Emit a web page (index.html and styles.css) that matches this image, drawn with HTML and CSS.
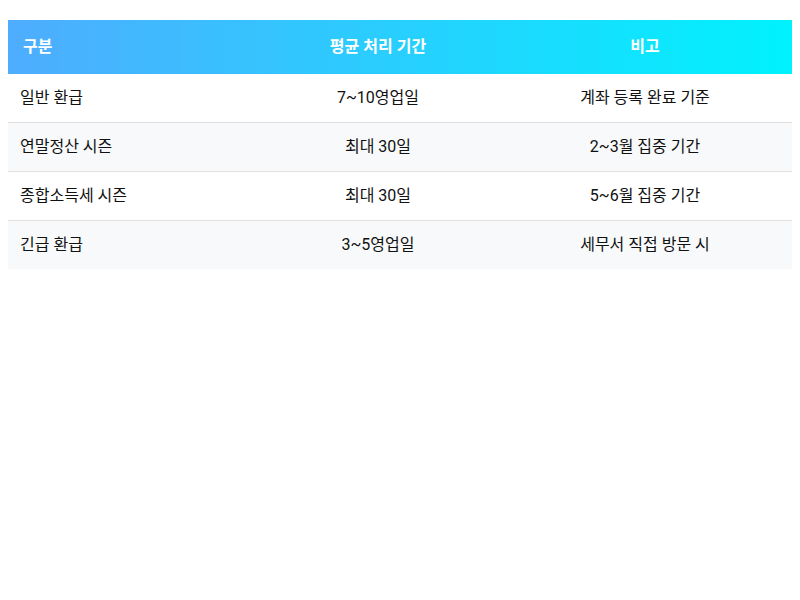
FILE: index.html
```html
<!DOCTYPE html>
<html lang="ko">
<head>
<meta charset="utf-8">
<link rel="stylesheet" href="styles.css">
</head>
<body>
<table class="refund-table">
  <colgroup>
    <col class="col-type">
    <col class="col-time">
    <col class="col-note">
  </colgroup>
  <thead>
    <tr>
      <th>구분</th>
      <th>평균 처리 기간</th>
      <th>비고</th>
    </tr>
  </thead>
  <tbody>
    <tr>
      <td>일반 환급</td>
      <td>7~10영업일</td>
      <td>계좌 등록 완료 기준</td>
    </tr>
    <tr>
      <td>연말정산 시즌</td>
      <td>최대 30일</td>
      <td>2~3월 집중 기간</td>
    </tr>
    <tr>
      <td>종합소득세 시즌</td>
      <td>최대 30일</td>
      <td>5~6월 집중 기간</td>
    </tr>
    <tr>
      <td>긴급 환급</td>
      <td>3~5영업일</td>
      <td>세무서 직접 방문 시</td>
    </tr>
  </tbody>
</table>
</body>
</html>
```

FILE: styles.css
```css
body {
  margin: 8px;
  font-family: Roboto, "Noto Sans CJK KR", sans-serif;
  background: #fff;
}
.refund-table {
  margin-top: 12px;
  width: 784px;
  border-collapse: collapse;
  table-layout: fixed;
  font-size: 16px;
  color: #111;
}
.col-type { width: 250px; }
.col-time { width: 240px; }
.col-note { width: 294px; }
.refund-table thead tr {
  background: linear-gradient(90deg, #4facfe 0%, #00f2fe 100%);
}
.refund-table th {
  box-sizing: border-box;
  color: #fff;
  font-weight: 700;
  padding: 15px;
  line-height: 24px;
  text-align: center;
}
.refund-table td {
  box-sizing: border-box;
  padding: 12px;
  line-height: 24px;
  text-align: center;
  border-bottom: 1px solid #e0e0e0;
}
.refund-table th:first-child {
  text-align: left;
  padding-left: 15px;
}
.refund-table td:first-child {
  text-align: left;
  padding-left: 12px;
}
.refund-table tbody tr:nth-child(even) {
  background: #f8f9fa;
}
.refund-table tbody tr:last-child td {
  border-bottom: none;
}
```
